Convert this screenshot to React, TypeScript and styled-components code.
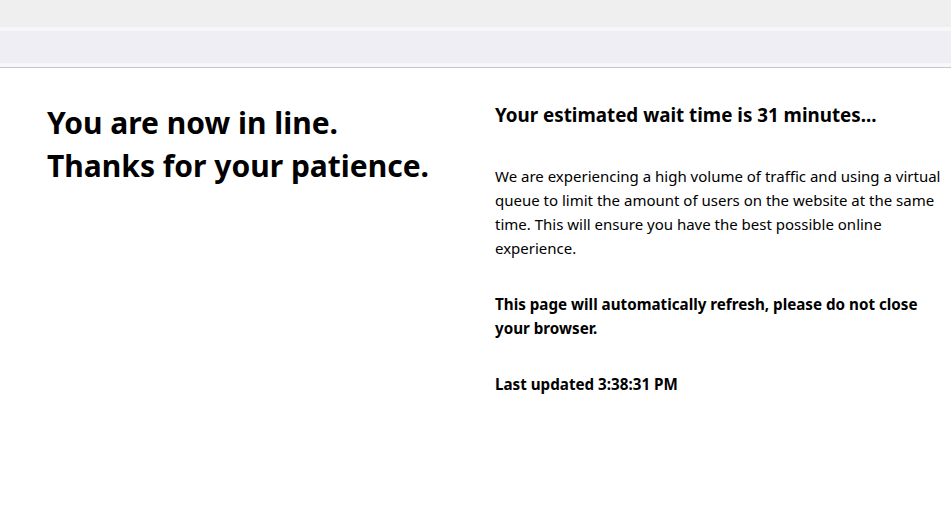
import { createGlobalStyle } from "styled-components";
import styled from "styled-components";

const GlobalStyle = createGlobalStyle`
  html, body {
    margin: 0;
    padding: 0;
    background: #ffffff;
  }
  body {
    font-family: "Noto Sans", "Open Sans", sans-serif;
    color: #000000;
  }
`;

const Chrome = styled.div`
  display: flex;
  flex-direction: column;
`;

const Band = styled.div<{ $h: number; $bg: string }>`
  height: ${(p) => p.$h}px;
  background: ${(p) => p.$bg};
`;

const Rule = styled.div`
  height: 1px;
  background: #c6c6cc;
`;

const Main = styled.main`
  display: grid;
  grid-template-columns: 448px 448px;
  padding: 0 0 0 47px;
`;

const Title = styled.h1`
  margin: 33px 0 0;
  font-size: 30px;
  line-height: 43px;
  font-weight: 700;
`;

const Side = styled.section`
  padding-top: 32px;
`;

const WaitTime = styled.h2`
  margin: 0 0 34px;
  font-size: 18.8px;
  line-height: 30px;
  font-weight: 700;
`;

const Para = styled.p<{ $bold?: boolean }>`
  margin: 0 0 32px;
  font-size: ${(p) => (p.$bold ? "15.2px" : "15px")};
  line-height: 24px;
  font-weight: ${(p) => (p.$bold ? 700 : 400)};
`;

export default function App() {
  return (
    <>
      <GlobalStyle />
      <Chrome>
        <Band $h={27} $bg="#efefef" />
        <Band $h={4} $bg="#f7f7f9" />
        <Band $h={32} $bg="#efeef4" />
        <Band $h={4} $bg="#f7f7f9" />
        <Rule />
      </Chrome>
      <Main>
        <Title>
          You are now in line.
          <br />
          Thanks for your patience.
        </Title>
        <Side>
          <WaitTime>Your estimated wait time is 31 minutes...</WaitTime>
          <Para>
            We are experiencing a high volume of traffic and using a virtual
            queue to limit the amount of users on the website at the same time.
            This will ensure you have the best possible online experience.
          </Para>
          <Para $bold>
            This page will automatically refresh, please do not close your
            browser.
          </Para>
          <Para $bold>Last updated 3:38:31 PM</Para>
        </Side>
      </Main>
    </>
  );
}
